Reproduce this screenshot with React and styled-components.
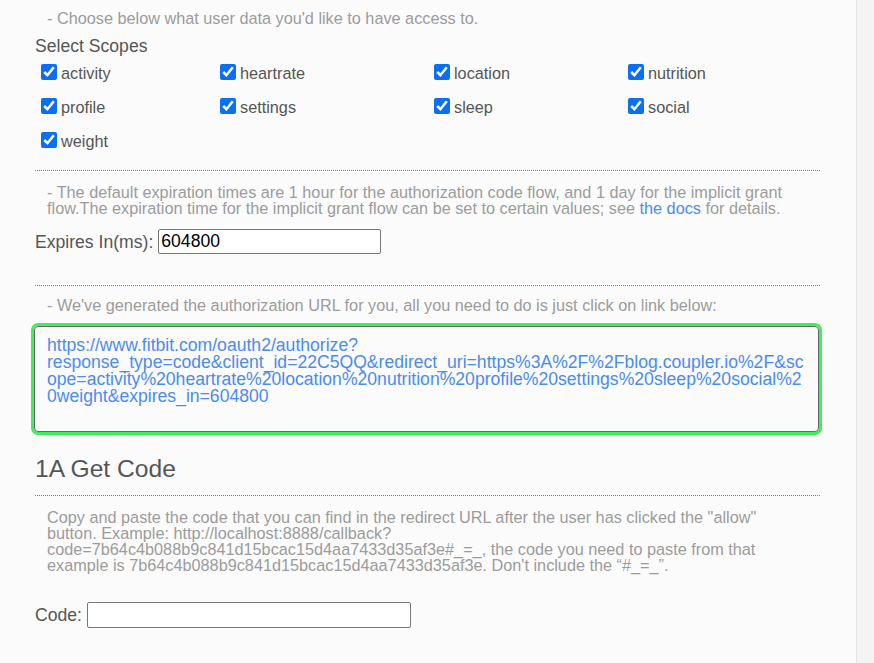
import styled, {createGlobalStyle} from 'styled-components'

const GlobalStyle = createGlobalStyle`
	html, body {
		margin: 0;
		padding: 0;
		background: #fbfbfb;
		font-family: "Liberation Sans", Arial, sans-serif;
	}
`

const scopes = [
	'activity', 'heartrate', 'location', 'nutrition',
	'profile', 'settings', 'sleep', 'social',
	'weight'
]

const authUrl = 'https://www.fitbit.com/oauth2/authorize?response_type=code&client_id=22C5QQ&redirect_uri=https%3A%2F%2Fblog.coupler.io%2F&scope=activity%20heartrate%20location%20nutrition%20profile%20settings%20sleep%20social%20weight&expires_in=604800'

const Page = styled.div`
	display: flex;
	min-height: 663px;
`

const Main = styled.div`
	flex: 0 0 856px;
	background: #fbfbfb;
	border-right: 1px solid #e3e3e3;
`

const Side = styled.div`
	flex: 1;
	background: #f4f4f4;
`

const Content = styled.div`
	width: 785px;
	margin-left: 35px;
	padding-bottom: 30px;
`

const Note = styled.p`
	margin: ${p => p.$top || 13}px 0 0;
	padding: 0 15px 0 12px;
	font-size: 16.25px;
	line-height: 16px;
	color: #9b9b9b;
`

const DocLink = styled.a`
	color: #4a8bf0;
	text-decoration: none;
`

const Label = styled.div`
	margin-top: ${p => p.$top || 0}px;
	font-size: 17.6px;
	line-height: 20px;
	color: #555;
`

const ScopeGrid = styled.div`
	display: grid;
	grid-template-columns: 179px 214px 194px 1fr;
	grid-auto-rows: 34px;
	margin-left: 6px;
`

const Scope = styled.label`
	display: flex;
	align-items: center;
	gap: 4px;
	font-size: 16.25px;
	color: #555;

	input {
		width: 16px;
		height: 16px;
		margin: 0 0 2px;
		accent-color: #0b6ff5;
	}
`

const Divider = styled.hr`
	margin: ${p => p.$top}px 0 0;
	border: 0;
	border-top: 1px dotted #7a7a7a;
	height: 0;
`

const FieldRow = styled.div`
	display: flex;
	align-items: center;
	gap: 5px;
	margin-top: ${p => p.$top}px;
`

const Field = styled.input`
	box-sizing: border-box;
	width: ${p => p.$width}px;
	height: ${p => p.$height || 25}px;
	padding: 0 2px;
	border: 1px solid #777;
	border-radius: 2px;
	background: #fff;
	font-family: "Liberation Sans", Arial, sans-serif;
	font-size: 17.6px;
	color: #000;
`

const UrlBox = styled.div`
	margin: 13px 1px 0 -1px;
	padding: 10px 13px 26px 12px;
	border: 1px solid #666;
	border-radius: 4px;
	outline: 3px solid #3def5a;
	box-shadow: 0 2px 0 #8a8a8a;
	font-size: 17.6px;
	line-height: 17px;
	overflow-wrap: anywhere;
`

const UrlLink = styled.a`
	color: #4a8bf0;
	text-decoration: none;
`

const Heading = styled.h2`
	margin: 22px 0 0;
	font-size: 24.6px;
	font-weight: normal;
	line-height: 30px;
	color: #555;
`

const App = () => {
	return (
		<Page>
			<GlobalStyle/>
			<Main>
				<Content>
					<Note $top={10}>- Choose below what user data you'd like to have access to.</Note>
					<Label $top={10}>Select Scopes</Label>
					<ScopeGrid>
						{scopes.map(s => (
							<Scope key={s}>
								<input type="checkbox" defaultChecked/>
								{s}
							</Scope>
						))}
					</ScopeGrid>

					<Divider $top={12}/>
					<Note>
						- The default expiration times are 1 hour for the authorization code flow, and 1 day for the implicit grant flow.The expiration time for the implicit grant flow can be set to certain values; see <DocLink href="#">the docs</DocLink> for details.
					</Note>
					<FieldRow $top={13}>
						<Label>Expires In(ms):</Label>
						<Field $width={223} defaultValue="604800"/>
					</FieldRow>

					<Divider $top={31}/>
					<Note $top={11}>- We've generated the authorization URL for you, all you need to do is just click on link below:</Note>
					<UrlBox>
						<UrlLink href="#">{authUrl}</UrlLink>
					</UrlBox>

					<Heading>1A Get Code</Heading>
					<Divider $top={11}/>
					<Note>
						Copy and paste the code that you can find in the redirect URL after the user has clicked the "allow" button. Example: http://localhost:8888/callback?code=7b64c4b088b9c841d15bcac15d4aa7433d35af3e#_=_, the code you need to paste from that example is 7b64c4b088b9c841d15bcac15d4aa7433d35af3e. Don't include the “#_=_”.
					</Note>
					<FieldRow $top={29}>
						<Label>Code:</Label>
						<Field $width={324} $height={26}/>
					</FieldRow>
				</Content>
			</Main>
			<Side/>
		</Page>
	)
}

export default App
